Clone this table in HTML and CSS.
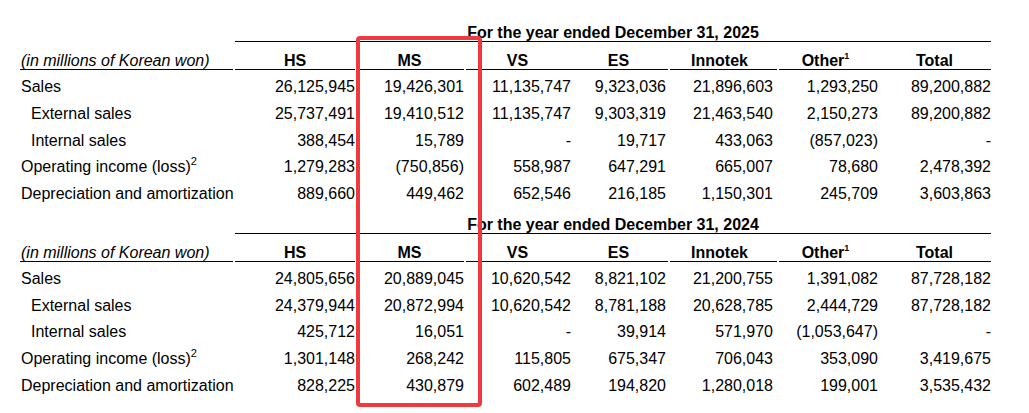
FILE: index.html
```html
<!DOCTYPE html>
<html lang="en">
<head>
<meta charset="utf-8">
<title>Segment information</title>
<link rel="stylesheet" href="styles.css">
</head>
<body>
<div class="page">
  <section class="block">
    <div class="title-row">
      <div class="title">For the year ended December 31, 2025</div>
    </div>
    <div class="head-row">
      <div class="unit">(in millions of Korean won)</div>
      <div class="hd">HS</div>
      <div class="hd">MS</div>
      <div class="hd">VS</div>
      <div class="hd">ES</div>
      <div class="hd">Innotek</div>
      <div class="hd">Other<sup class="fn1">1</sup></div>
      <div class="hd">Total</div>
    </div>
    <div class="rules">
      <span class="r-label"></span><span class="r-hs"></span><span class="r-ms"></span><span class="r-vses"></span><span class="r-inno"></span><span class="r-rest"></span>
    </div>
    <div class="body">
      <div class="row"><div class="lbl">Sales</div><div class="num">26,125,945</div><div class="num">19,426,301</div><div class="num">11,135,747</div><div class="num">9,323,036</div><div class="num">21,896,603</div><div class="num">1,293,250</div><div class="num">89,200,882</div></div>
      <div class="row"><div class="lbl sub">External sales</div><div class="num">25,737,491</div><div class="num">19,410,512</div><div class="num">11,135,747</div><div class="num">9,303,319</div><div class="num">21,463,540</div><div class="num">2,150,273</div><div class="num">89,200,882</div></div>
      <div class="row"><div class="lbl sub">Internal sales</div><div class="num">388,454</div><div class="num">15,789</div><div class="num">-</div><div class="num">19,717</div><div class="num">433,063</div><div class="num">(857,023)</div><div class="num">-</div></div>
      <div class="row"><div class="lbl">Operating income (loss)<sup class="fn2">2</sup></div><div class="num">1,279,283</div><div class="num">(750,856)</div><div class="num">558,987</div><div class="num">647,291</div><div class="num">665,007</div><div class="num">78,680</div><div class="num">2,478,392</div></div>
      <div class="row"><div class="lbl">Depreciation and amortization</div><div class="num">889,660</div><div class="num">449,462</div><div class="num">652,546</div><div class="num">216,185</div><div class="num">1,150,301</div><div class="num">245,709</div><div class="num">3,603,863</div></div>
    </div>
  </section>

  <section class="block">
    <div class="title-row">
      <div class="title">For the year ended December 31, 2024</div>
    </div>
    <div class="head-row">
      <div class="unit">(in millions of Korean won)</div>
      <div class="hd">HS</div>
      <div class="hd">MS</div>
      <div class="hd">VS</div>
      <div class="hd">ES</div>
      <div class="hd">Innotek</div>
      <div class="hd">Other<sup class="fn1">1</sup></div>
      <div class="hd">Total</div>
    </div>
    <div class="rules">
      <span class="r-label"></span><span class="r-hs"></span><span class="r-ms"></span><span class="r-vses"></span><span class="r-inno"></span><span class="r-rest"></span>
    </div>
    <div class="body">
      <div class="row"><div class="lbl">Sales</div><div class="num">24,805,656</div><div class="num">20,889,045</div><div class="num">10,620,542</div><div class="num">8,821,102</div><div class="num">21,200,755</div><div class="num">1,391,082</div><div class="num">87,728,182</div></div>
      <div class="row"><div class="lbl sub">External sales</div><div class="num">24,379,944</div><div class="num">20,872,994</div><div class="num">10,620,542</div><div class="num">8,781,188</div><div class="num">20,628,785</div><div class="num">2,444,729</div><div class="num">87,728,182</div></div>
      <div class="row"><div class="lbl sub">Internal sales</div><div class="num">425,712</div><div class="num">16,051</div><div class="num">-</div><div class="num">39,914</div><div class="num">571,970</div><div class="num">(1,053,647)</div><div class="num">-</div></div>
      <div class="row"><div class="lbl">Operating income (loss)<sup class="fn2">2</sup></div><div class="num">1,301,148</div><div class="num">268,242</div><div class="num">115,805</div><div class="num">675,347</div><div class="num">706,043</div><div class="num">353,090</div><div class="num">3,419,675</div></div>
      <div class="row"><div class="lbl">Depreciation and amortization</div><div class="num">828,225</div><div class="num">430,879</div><div class="num">602,489</div><div class="num">194,820</div><div class="num">1,280,018</div><div class="num">199,001</div><div class="num">3,535,432</div></div>
    </div>
  </section>

  <div class="highlight"></div>
</div>
</body>
</html>
```

FILE: styles.css
```css
html, body {
  margin: 0;
  padding: 0;
  background: #ffffff;
}

body {
  font-family: "Liberation Sans", Arial, sans-serif;
  font-size: 16px;
  color: #000000;
}

.page {
  position: relative;
  width: 1029px;
  height: 413px;
  padding: 23px 0 0 20px;
  box-sizing: border-box;
  overflow: hidden;
}

.block {
  width: 971px;
  margin-bottom: 8px;
}

.block + .block {
  margin-bottom: 0;
}

.title-row,
.head-row,
.rules,
.row {
  display: grid;
  grid-template-columns: 215px 120px 109px 107px 95px 107px 105px 113px;
}

.title {
  grid-column: 2 / 9;
  text-align: center;
  font-weight: bold;
  line-height: 17px;
  padding-top: 1px;
  border-bottom: 1px solid #000000;
}

.head-row > div {
  line-height: 17px;
  padding-top: 10px;
}

.unit {
  font-style: italic;
  padding-left: 1px;
}

.hd {
  text-align: center;
  font-weight: bold;
}

.fn1 {
  font-size: 9px;
  line-height: 0;
  vertical-align: 7px;
  font-weight: bold;
}

.fn2 {
  font-size: 11px;
  line-height: 0;
  vertical-align: 7px;
}

.rules {
  height: 1px;
}

.rules span {
  display: block;
  height: 1px;
  background: #000000;
}

.r-label { grid-column: 1; margin-right: 2px; }
.r-hs    { grid-column: 2; }
.r-ms    { grid-column: 3; margin-left: 5px; }
.r-vses  { grid-column: 4 / 6; margin-left: 2px; margin-right: -2px; }
.r-inno  { grid-column: 6; margin-left: 4px; margin-right: -4px; }
.r-rest  { grid-column: 7 / 9; margin-left: 6px; }

.body {
  padding-top: 3px;
}

.row {
  height: 26.75px;
  line-height: 27px;
}

.lbl {
  padding-left: 1px;
  white-space: nowrap;
}

.lbl.sub {
  padding-left: 11px;
}

.num {
  text-align: right;
  white-space: nowrap;
}

.highlight {
  position: absolute;
  left: 356px;
  top: 36px;
  width: 126px;
  height: 371px;
  box-sizing: border-box;
  border: 4px solid #f0393d;
  border-radius: 4px;
}
```
